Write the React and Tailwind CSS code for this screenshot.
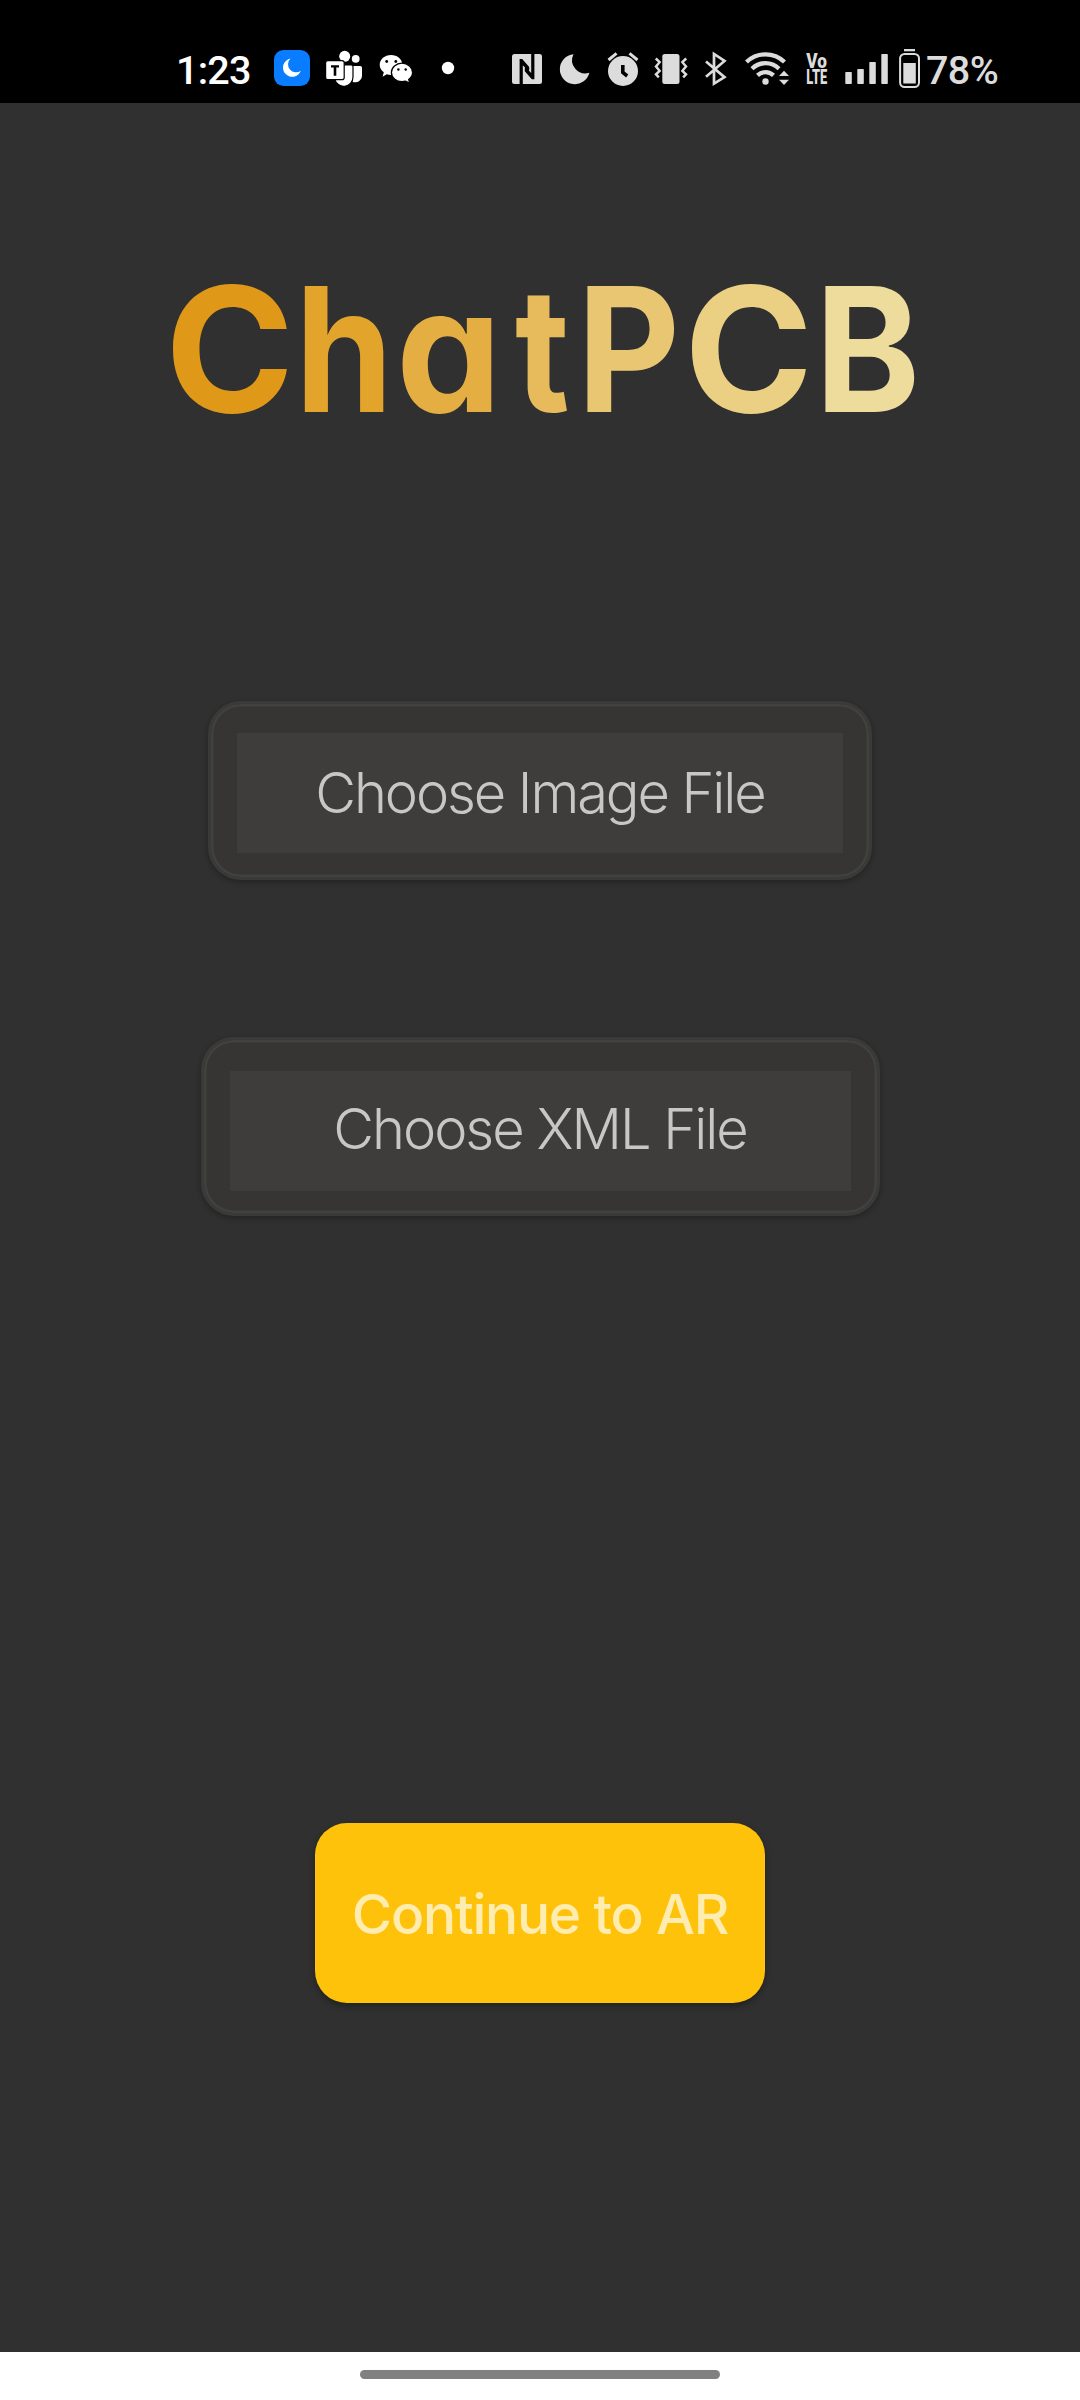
// Status-bar glyphs share one coordinate space: x runs across the bar, y from 49 to 89.
function Glyph({ x, w, className = "", children }) {
  return (
    <svg
      viewBox={`${x} 49 ${w} 40`}
      width={w}
      height={40}
      fill="currentColor"
      className={"shrink-0 " + className}
    >
      {children}
    </svg>
  );
}

function StatusBar() {
  return (
    <div className="flex h-[103px] shrink-0 items-start bg-black pl-[176px] pt-[49px] text-[#dcdcdc]">
      <div className="w-[76px] whitespace-nowrap pt-px font-['Roboto'] text-[39.5px] font-medium leading-[41px] tracking-[-0.8px] text-white">
        1:23
      </div>

      <Glyph x={273} w={38} className="ml-[21px] text-white">
        <rect x="274" y="50" width="36" height="36" rx="9.5" fill="#0a7cff" />
        <path d="M290.5 58.6a9.2 9.2 0 1 0 10.3 12.2a8 8 0 0 1-10.3-12.2z" />
      </Glyph>

      <Glyph x={325} w={38} className="ml-[14px] text-white">
        <circle cx="344.7" cy="56.3" r="5.5" />
        <circle cx="355.7" cy="58.8" r="3.9" />
        <path d="M351 66h9.2a1.8 1.8 0 0 1 1.8 1.8v7.7a6.8 6.8 0 0 1-9.5 6.2z" />
        <path
          d="M336 65h15.2a1.8 1.8 0 0 1 1.8 1.8V77a9.2 9.2 0 0 1-18.2 2z"
          stroke="#000"
          strokeWidth="1.2"
        />
        <rect x="325.6" y="60.6" width="18.6" height="19" rx="2.2" stroke="#000" strokeWidth="1.2" />
        <path d="M331 65.2h8v2.3h-2.7v8.3h-2.6v-8.3H331z" fill="#000" />
      </Glyph>

      <Glyph x={379} w={35} className="ml-[16px] text-white">
        <path d="M391 55c-6.3 0-11.3 4.3-11.3 9.7 0 3 1.6 5.7 4.1 7.5l-1.2 4.5 4.2-2.4c1.3.4 2.7.6 4.2.6 6.3 0 11.3-4.5 11.3-10.2S397.3 55 391 55z" />
        <path
          d="M402 63.2c-5.9 0-10.6 4.1-10.6 9.2s4.7 9.2 10.6 9.2c1.3 0 2.5-.2 3.6-.5l4.2 2.3-1.1-4c2.3-1.7 3.9-4.2 3.9-7 0-5.1-4.7-9.2-10.6-9.2z"
          stroke="#000"
          strokeWidth="1.3"
        />
        <circle cx="386.7" cy="61.5" r="1.4" fill="#000" />
        <circle cx="395.8" cy="61.5" r="1.4" fill="#000" />
        <circle cx="398.4" cy="69.5" r="1.2" fill="#000" />
        <circle cx="405.7" cy="69.5" r="1.2" fill="#000" />
      </Glyph>

      <Glyph x={441} w={14} className="ml-[27px] text-white">
        <circle cx="448" cy="68" r="6.2" />
      </Glyph>

      <Glyph x={512} w={30} className="ml-[57px]">
        <rect x="512" y="54" width="30" height="30" rx="2.5" />
        <path d="M519.6 59h2.6l7 8v3.2l-1.2.6-5.2-5.6V84h-3.2z" fill="#000" />
        <path d="M531.2 54h3.2v25.200h-2.600l-7-8V68l1.200-.6 5.200 5.600z" fill="#000" />
      </Glyph>

      <Glyph x={559} w={32} className="ml-[17px]">
        <path d="M573.5 54.2a15 15 0 1 0 15.9 18.6a13.3 13.3 0 0 1-15.9-18.6z" />
      </Glyph>

      <Glyph x={606} w={34} className="ml-[15px]">
        <circle cx="623" cy="71" r="15" />
        <path d="M608.5 60l8-6.6M637.5 60l-8-6.6" stroke="currentColor" strokeWidth="3" />
        <path d="M622.8 65v7.5l4.4 3.500" fill="none" stroke="#000" strokeWidth="3.6" />
      </Glyph>

      <Glyph x={654} w={34} className="ml-[14px]">
        <rect x="662.3" y="54" width="17.2" height="30" rx="2.5" />
        <path
          d="M655.8 58.500l3.8 3.700-3.6 4.300 3.600 4.300-3.600 3.500 2.800 3M686.200 58.500l-3.800 3.700 3.600 4.300-3.600 4.300 3.600 3.500-2.800 3"
          fill="none"
          stroke="currentColor"
          strokeWidth="2.5"
        />
      </Glyph>

      <Glyph x={704} w={23} className="ml-[16px]">
        <path
          d="M706 61.5l18.5 15.700-10.500 6.500V54l10.500 7L706 76.800"
          fill="none"
          stroke="currentColor"
          strokeWidth="2.7"
        />
      </Glyph>

      <Glyph x={744} w={46} className="ml-[17px]">
        <circle cx="765.5" cy="81.5" r="3.2" />
        <g fill="none" stroke="currentColor" strokeWidth="4.3">
          <path d="M746.5 62a27.500 27.500 0 0 1 38 0" />
          <path d="M752 68.700a19.300 19.300 0 0 1 27 0" />
          <path d="M757.500 75.400a11.500 11.500 0 0 1 16 0" />
        </g>
        <path d="M779 76l5-5.200 5 5.200zM779 79.800h10l-5 5.200z" />
      </Glyph>

      <Glyph x={806} w={24} className="ml-[16px]">
        <g fontFamily="Roboto, sans-serif" fontWeight="900" fontSize="19.5">
          <text transform="translate(806.3 67.6) scale(0.88 1)">Vo</text>
          <text transform="translate(806.3 83.8) scale(0.66 1)">LTE</text>
        </g>
      </Glyph>

      <Glyph x={844} w={45} className="ml-[14px]">
        <rect x="845.3" y="72" width="6.5" height="12" rx="0.8" />
        <rect x="857.3" y="69" width="6.5" height="15" rx="0.8" />
        <rect x="869.3" y="62" width="6.5" height="22" rx="0.8" />
        <rect x="881.3" y="54" width="6.5" height="30" rx="0.8" />
      </Glyph>

      <Glyph x={898} w={23} className="ml-[9px]">
        <rect x="904" y="49" width="11" height="2.3" />
        <rect
          x="900.1"
          y="53.9"
          width="18.9"
          height="33.1"
          rx="4.5"
          fill="none"
          stroke="currentColor"
          strokeWidth="2"
        />
        <rect x="903.3" y="63" width="12.5" height="20.5" />
      </Glyph>

      <div className="ml-[5px] whitespace-nowrap pt-px font-['Roboto'] text-[39.5px] font-medium leading-[41px] tracking-[-0.6px]">
        78%
      </div>
    </div>
  );
}

const logo = [
  ["C", "w-[130px] text-[#e09819]", "scale-x-[1.01]"],
  ["h", "w-[100.5px] text-[#e3a42c]", "scale-x-[0.91]"],
  ["a", "w-[119.5px] text-[#e4ae42]", "scale-x-[0.97]"],
  ["t", "w-[62px] text-[#e7bb5b]", "scale-x-[0.86]"],
  ["P", "w-[106.5px] text-[#e9c671]", "scale-x-[0.92]"],
  ["C", "w-[131.5px] text-[#ebd083]", "scale-x-[1.01]"],
  ["B", "w-[110px] text-[#eedc9d]", "scale-x-[0.92]"],
];

function Logo() {
  return (
    <h1 className="ml-[165px] mt-[160px] flex h-[173px] font-['Inter'] text-[173px] font-bold leading-[173px] [font-feature-settings:'cv11']">
      {logo.map(([letter, cell, stretch], i) => (
        <span key={i} className={"shrink-0 " + cell}>
          <span className={"inline-block origin-left " + stretch}>{letter}</span>
        </span>
      ))}
    </h1>
  );
}

function FileButton({ label, className, tracking }) {
  return (
    <button
      className={
        "flex h-[179px] items-start justify-center rounded-[33px] border-[3px] border-[#3a3a39] bg-[#363533] shadow-[inset_0_0_0_2.5px_#414140,0_2px_5px_1px_rgba(0,0,0,0.22)] " +
        className
      }
    >
      <span
        className={
          "mx-[26px] flex h-[120px] flex-1 items-center justify-center whitespace-nowrap bg-[#3e3d3b] font-['Inter'] text-[56px] font-light leading-none text-[#c8c7c5] " +
          tracking
        }
      >
        {label}
      </span>
    </button>
  );
}

export default function App() {
  return (
    <div className="flex h-[2400px] w-[1080px] flex-col overflow-hidden bg-[#303030]">
      <StatusBar />
      <main className="flex flex-1 flex-col items-center">
        <div className="w-full">
          <Logo />
        </div>
        <FileButton
          label="Choose Image File"
          className="mt-[265px] w-[664px] pt-[28.5px]"
          tracking="tracking-[-2.1px]"
        />
        <FileButton
          label="Choose XML File"
          className="mt-[157px] w-[679px] pt-[30.5px] [&>span]:pb-[3px]"
          tracking="tracking-[-2px]"
        />
        <button className="mt-[607px] h-[180px] w-[450px] whitespace-nowrap rounded-[32px] bg-[#ffc20a] pt-0.5 font-['Inter'] text-[55px] font-medium leading-none tracking-[-1.2px] text-[#ffecb0] shadow-[0_3px_6px_rgba(0,0,0,0.35)]">
          Continue to AR
        </button>
      </main>
      <div className="flex h-[48px] shrink-0 justify-center bg-white pt-[18px]">
        <div className="h-[9px] w-[360px] rounded-full bg-[#808080]" />
      </div>
    </div>
  );
}
